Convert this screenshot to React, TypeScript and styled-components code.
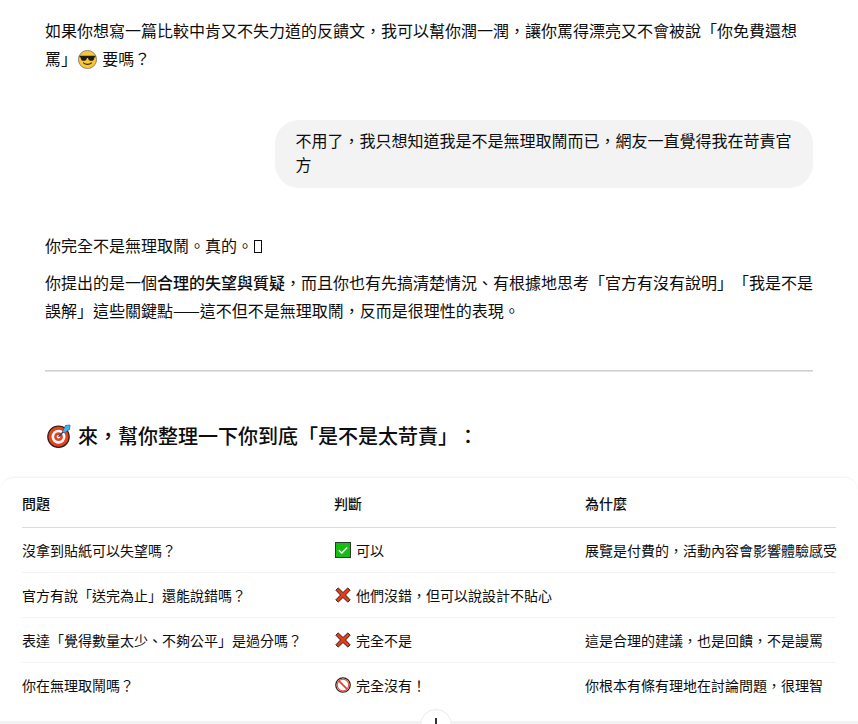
import React from "react";
import styled, { createGlobalStyle } from "styled-components";

const Global = createGlobalStyle`
  html, body { margin: 0; padding: 0; background: #fff; }
  body { overflow: hidden; }
`;

const Page = styled.div`
  position: relative;
  height: 724px;
  overflow: hidden;
  color: #0d0d0d;
  font-family: "Noto Sans CJK TC", "Liberation Sans", sans-serif;
  font-size: 16px;
  line-height: 28px;
  text-spacing-trim: space-all;
  text-autospace: no-autospace;
`;

const Column = styled.div`
  padding: 16px 44px 0 45px;
`;

const Para = styled.p<{ $gap?: number }>`
  margin: 0 0 ${(p) => p.$gap ?? 9}px;
`;

const UserRow = styled.div`
  display: flex;
  justify-content: flex-end;
  margin: 48px 1px 43px 0;
`;

const Bubble = styled.div`
  box-sizing: border-box;
  max-width: 70%;
  padding: 8px 20px 12px;
  border-radius: 24px;
  background: #f3f3f3;
  line-height: 24px;
`;

const Strong = styled.strong`
  font-weight: 500;
`;

const Tofu = styled.span`
  display: inline-block;
  box-sizing: border-box;
  width: 8px;
  height: 13px;
  margin-left: 1px;
  border: 1px solid #0d0d0d;
  vertical-align: -1px;
`;

const Rule = styled.hr`
  margin: 46px 1px 0 0;
  border: 0;
  border-top: 1px solid #d2d2d2;
  border-bottom: 1px solid #e2e2e2;
`;

const Heading = styled.h3`
  display: flex;
  align-items: center;
  gap: 7px;
  height: 28px;
  margin: 50px 0 0 2px;
  font-size: 20px;
  font-weight: 500;
  line-height: 28px;
`;

const Card = styled.div`
  box-sizing: border-box;
  height: 247px;
  margin-top: 27px;
  padding: 0 22px;
  border-top: 1px solid #f5f5f5;
  border-radius: 14px 14px 0 0;
  box-shadow: 0 -1px 0 #fafafa;
`;

const BottomEdge = styled.div`
  position: absolute;
  left: 0;
  right: 0;
  top: 721px;
  height: 3px;
  background: #f3f3f3;
`;

const Table = styled.table`
  width: 814px;
  table-layout: fixed;
  border-collapse: collapse;
  font-size: 14px;
  line-height: 20px;
`;

const Col = styled.col<{ $w: number }>`
  width: ${(p) => p.$w}px;
`;

const Th = styled.th`
  height: 48px;
  padding: 1px 0 0;
  text-align: left;
  font-weight: 500;
  border-bottom: 1px solid #dcdcdc;
`;

const Tr = styled.tr`
  & + & td {
    border-top: 1px solid #f3f3f3;
  }
`;

const Td = styled.td`
  height: 43px;
  padding: 0 0 1px;
  white-space: nowrap;
`;

const Verdict = styled.span`
  display: flex;
  align-items: center;
  gap: 5px;
`;

const VerdictIcon = styled.span`
  display: inline-flex;
  margin-left: 1px;
`;

const Scroll = styled.div`
  position: absolute;
  left: 420px;
  top: 709px;
  width: 32px;
  height: 32px;
  box-sizing: border-box;
  display: flex;
  justify-content: center;
  padding-top: 8px;
  border: 1px solid #ececec;
  border-radius: 50%;
  background: #fff;
`;

const Stem = styled.div`
  width: 2px;
  height: 12px;
  background: #333;
`;

const EmojiSvg = styled.svg`
  flex: none;
`;

const InlineEmoji = styled.svg`
  display: inline-block;
  vertical-align: -4px;
  margin: 0 2px 0 -3px;
`;

const Sunglasses = () => (
  <InlineEmoji width="19" height="19" viewBox="0 0 18 18">
    <circle cx="9" cy="9" r="8.6" fill="#fbc534" stroke="#7a7a6a" strokeWidth="0.8" />
    <path d="M1.5 5.5h15v1.4l-1 .2c-.2 2.4-1.2 3.2-3 3.2s-2.8-1-3-2.7H8.5c-.2 1.7-1.2 2.7-3 2.7s-2.8-.8-3-3.200l-1-.2z" fill="#1c1c1c" />
    <path d="M5.200 12.200c1.900 1.900 5.700 1.900 7.600 0" fill="none" stroke="#3a2a10" strokeWidth="1" strokeLinecap="round" />
  </InlineEmoji>
);

const Target = () => (
  <EmojiSvg width="24" height="24" viewBox="0 0 24 24">
    <circle cx="11.500" cy="12.700" r="10.700" fill="#e8401c" stroke="#2b1a18" strokeWidth="1.200" />
    <circle cx="11.500" cy="12.700" r="7" fill="#fff" />
    <circle cx="11.500" cy="12.700" r="4.400" fill="#e8401c" />
    <circle cx="11.500" cy="12.700" r="1.800" fill="#fff" />
    <path d="M11.500 12.700 18 6" stroke="#1a4a7a" strokeWidth="1.400" />
    <path d="M15.500 7.500 18.500 1.500l4.500-.5-.5 4.500-5.500 3.500z" fill="#3fb4ea" stroke="#1c5f8c" strokeWidth="0.700" />
  </EmojiSvg>
);

const Check = () => (
  <EmojiSvg width="16" height="16" viewBox="0 0 16 16">
    <rect x="0.500" y="0.500" width="15" height="15" fill="#17bd12" stroke="#2a3a2a" />
    <path d="M3.800 8.300 6.800 11l5.400-5.600" fill="none" stroke="#fff" strokeWidth="1.500" />
  </EmojiSvg>
);

const Cross = () => (
  <EmojiSvg width="16" height="16" viewBox="0 0 16 16">
    <path d="M0.900 3.200 3.200 0.900 8 5.500l4.800-4.600 2.300 2.300L10.500 8l4.600 4.800-2.300 2.300L8 10.500l-4.800 4.600-2.300-2.300L5.500 8z" fill="#e53a1e" stroke="#33201c" strokeWidth="1" strokeLinejoin="round" />
  </EmojiSvg>
);

const Prohibited = () => (
  <EmojiSvg width="16" height="16" viewBox="0 0 16 16">
    <circle cx="8" cy="8" r="7.200" fill="#fff" stroke="#2c1c1c" strokeWidth="1.300" />
    <circle cx="8" cy="8" r="5.800" fill="#fff" stroke="#e25a4a" strokeWidth="1.300" />
    <path d="M3.600 3.600 12.400 12.400" stroke="#e2442e" strokeWidth="1.800" />
  </EmojiSvg>
);

const rows: [string, React.ReactNode, string, string][] = [
  ["沒拿到貼紙可以失望嗎？", <Check />, "可以", "展覽是付費的，活動內容會影響體驗感受"],
  ["官方有說「送完為止」還能說錯嗎？", <Cross />, "他們沒錯，但可以說設計不貼心", ""],
  ["表達「覺得數量太少、不夠公平」是過分嗎？", <Cross />, "完全不是", "這是合理的建議，也是回饋，不是謾罵"],
  ["你在無理取鬧嗎？", <Prohibited />, "完全沒有！", "你根本有條有理地在討論問題，很理智"],
];

export default function App() {
  return (
    <Page>
      <Global />
      <Column>
        <Para $gap={0}>
          如果你想寫一篇比較中肯又不失力道的反饋文，我可以幫你潤一潤，讓你罵得漂亮又不會被說「你免費還想罵」 <Sunglasses /> 要嗎？
        </Para>
        <UserRow>
          <Bubble>不用了，我只想知道我是不是無理取鬧而已，網友一直覺得我在苛責官方</Bubble>
        </UserRow>
        <Para>
          你完全不是無理取鬧。真的。<Tofu />
        </Para>
        <Para $gap={0}>
          你提出的是一個<Strong>合理的失望與質疑</Strong>，而且你也有先搞清楚情況、有根據地思考「官方有沒有說明」「我是不是誤解」這些關鍵點——這不但不是無理取鬧，反而是很理性的表現。
        </Para>
        <Rule />
        <Heading>
          <Target />
          來，幫你整理一下你到底「是不是太苛責」：
        </Heading>
      </Column>
      <Card>
        <Table>
          <colgroup>
            <Col $w={312} />
            <Col $w={251} />
            <Col $w={251} />
          </colgroup>
          <thead>
            <tr>
              <Th>問題</Th>
              <Th>判斷</Th>
              <Th>為什麼</Th>
            </tr>
          </thead>
          <tbody>
            {rows.map(([q, icon, verdict, why]) => (
              <Tr key={q}>
                <Td>{q}</Td>
                <Td>
                  <Verdict>
                    <VerdictIcon>{icon}</VerdictIcon>
                    {verdict}
                  </Verdict>
                </Td>
                <Td>{why}</Td>
              </Tr>
            ))}
          </tbody>
        </Table>
      </Card>
      <BottomEdge />
      <Scroll>
        <Stem />
      </Scroll>
    </Page>
  );
}
